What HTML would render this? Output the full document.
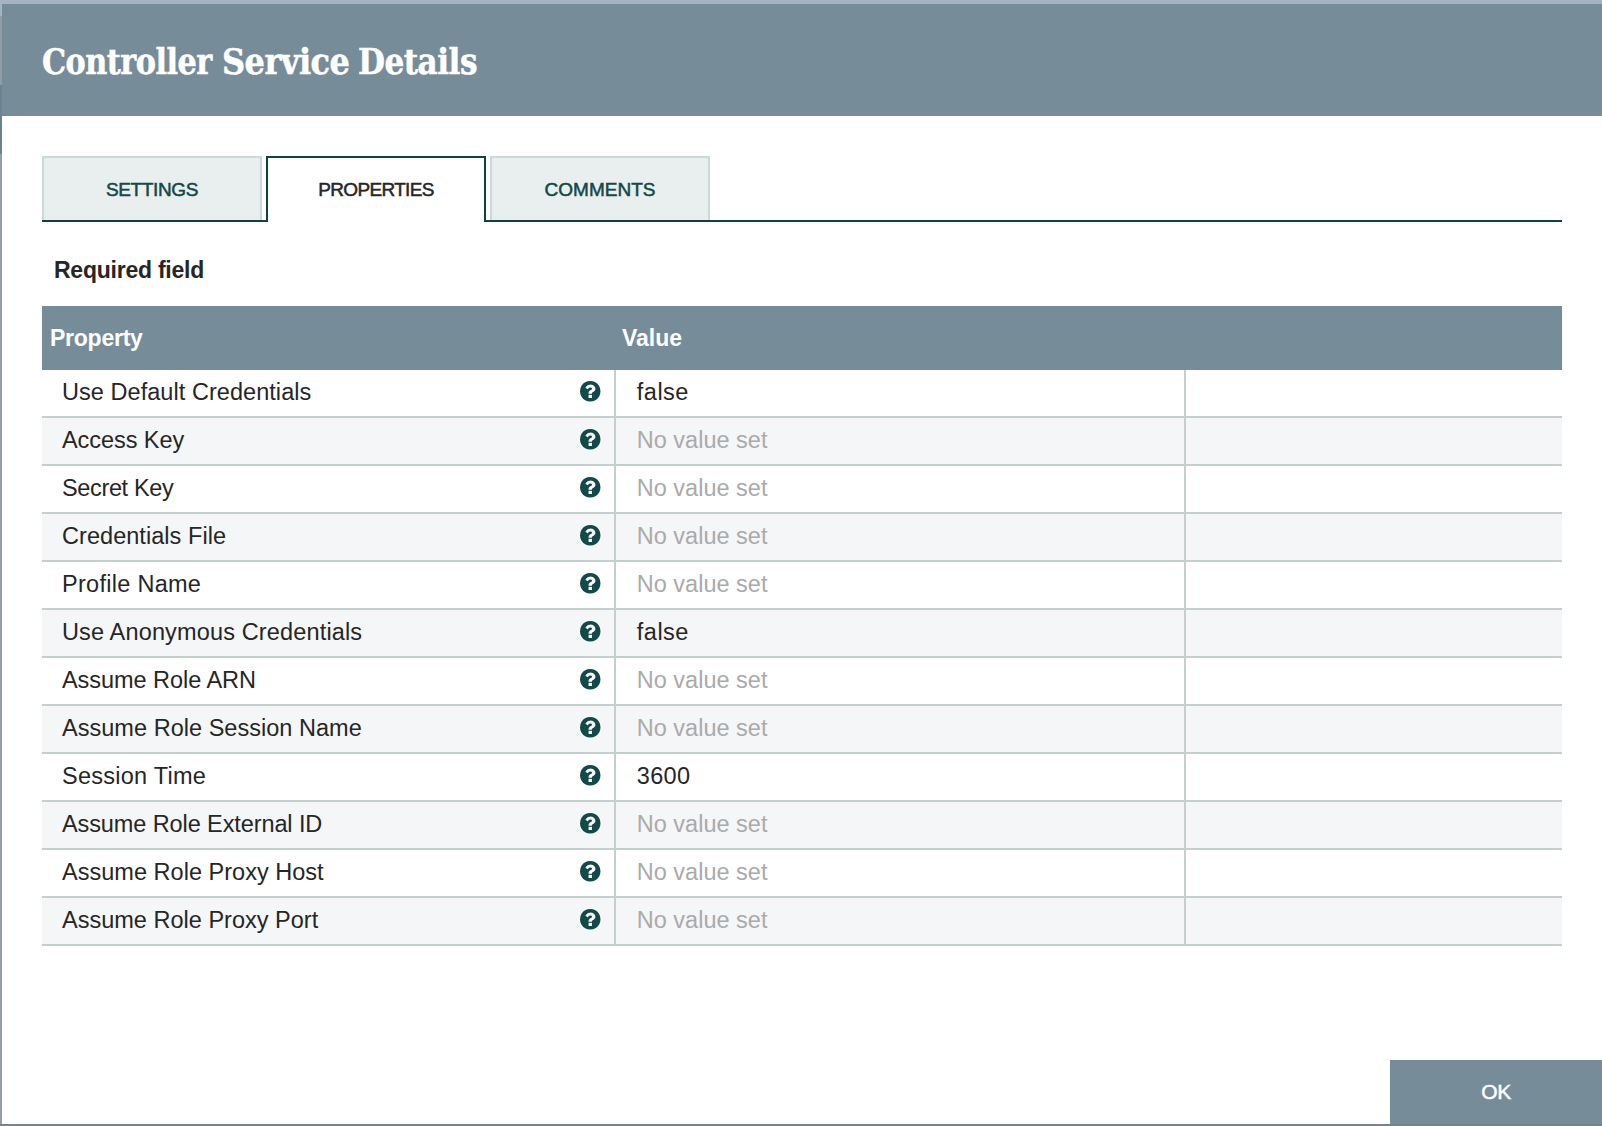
<!DOCTYPE html>
<html lang="en">
<head>
<meta charset="utf-8">
<title>Controller Service Details</title>
<style>
html,body{margin:0;padding:0;}
body{width:1602px;height:1126px;overflow:hidden;position:relative;background:#fff;font-family:"Liberation Sans",sans-serif;color:#262626;}
.abs{position:absolute;}
#bgtop{left:0;top:0;width:1602px;height:4px;background:#a6b4c1;}
#bgleft{left:0;top:0;width:2px;height:1126px;background:linear-gradient(#a3b5c2 0,#a3b5c2 16px,#8f9ea6 16px,#8f9ea6 85px,#6c8291 85px,#6c8291 154px,#929fa6 154px,#929fa6 100%);}
#bgbottom{left:0;top:1124px;width:1602px;height:2px;background:#77838b;}
#header{left:2px;top:4px;width:1600px;height:112px;background:#778c99;}
#title{-webkit-text-stroke:0.5px #fff;left:0.4px;top:37px;width:600px;height:50px;line-height:50px;font-family:"DejaVu Serif Condensed","DejaVu Serif","Liberation Serif",serif;font-weight:bold;font-size:35.6px;letter-spacing:-0.5px;color:#fff;white-space:nowrap;}
#title span{position:absolute;top:0;display:inline-block;transform-origin:0 50%;}
.tab{top:156px;height:62px;width:216px;border:2px solid #cdd8d9;border-bottom:none;background:#e9eeef;color:#124846;font-size:19px;-webkit-text-stroke:0.5px currentColor;text-align:center;line-height:63.6px;white-space:nowrap;}
.tab.sel{background:#fff;border-color:#0f4241;color:#262626;height:64px;z-index:2;}
#tabline{left:42px;top:220px;width:1520px;height:2px;background:#0f4241;}
#req{left:54px;top:256px;font-weight:bold;font-size:23px;letter-spacing:-0.24px;line-height:28px;white-space:nowrap;}
#thead{left:42px;top:306px;width:1520px;height:64px;background:#778c99;}
.th{top:306px;height:64px;line-height:65px;color:#fff;font-weight:bold;font-size:23px;white-space:nowrap;}
.row{left:42px;width:1520px;height:46px;border-bottom:2px solid #c4cfce;background:#fff;}
.row.odd{background:#f4f6f7;}
.row .name{position:absolute;left:20px;top:0;line-height:44px;font-size:23.5px;white-space:nowrap;color:#262626;}
.row .val{position:absolute;left:594.8px;top:0;line-height:44px;font-size:23.5px;white-space:nowrap;color:#262626;}
.row .val.unset{color:#aaaaaa;}
.row .ico{position:absolute;left:538px;top:11px;width:20.5px;height:20.5px;}
.vline{top:370px;width:2px;height:576px;background:#c4cfce;}
#ok{left:1390px;top:1060px;width:212px;height:64px;background:#778c99;color:#fff;font-size:21px;letter-spacing:-0.5px;-webkit-text-stroke:0.45px #fff;line-height:64px;text-align:center;}
</style>
</head>
<body>
<div class="abs" id="bgtop"></div>
<div class="abs" id="header"></div>
<div class="abs" id="bgleft"></div>
<div class="abs" id="bgbottom"></div>
<div class="abs" id="title"><span style="left:41.3px;transform:scaleX(0.945)">Controller</span> <span style="left:221.6px;transform:scaleX(1)">Service</span> <span style="left:357.5px;transform:scaleX(0.971)">Details</span></div>

<div class="abs" id="tabline"></div>
<div class="abs tab" style="left:42px;letter-spacing:-0.35px;">SETTINGS</div>
<div class="abs tab sel" style="left:266px;letter-spacing:-0.65px;">PROPERTIES</div>
<div class="abs tab" style="left:490px;letter-spacing:0px;">COMMENTS</div>

<div class="abs" id="req">Required field</div>

<div class="abs" id="thead"></div>
<div class="abs th" style="left:50px;letter-spacing:-0.25px;">Property</div>
<div class="abs th" style="left:622px;">Value</div>

<!--ROWS-START-->
<div class="abs row" style="top:370px;"><span class="name" style="letter-spacing:0.05px">Use Default Credentials</span><svg class="ico" viewBox="128 128 1536 1536"><path fill="#12494a" d="M1024 1376v-192q0-14-9-23t-23-9h-192q-14 0-23 9t-9 23v192q0 14 9 23t23 9h192q14 0 23-9t9-23zm256-672q0-88-55.500-163t-138.500-116-170-41q-243 0-371 213-15 24 8 42l132 100q7 6 19 6 16 0 25-12 53-68 86-92 34-24 86-24 48 0 85.500 26t37.500 59q0 38-20 61t-68 45q-63 28-115.500 86.500t-52.500 125.500v36q0 14 9 23t23 9h192q14 0 23-9t9-23q0-19 21.500-49.500t54.500-49.500q32-18 49-28.500t46-35 44.500-48 28-60.500 12.500-81zm384 192q0 209-103 385.500t-279.500 279.500-385.500 103-385.500-103-279.500-279.500-103-385.500 103-385.500 279.500-279.500 385.500-103 385.500 103 279.500 279.500 103 385.500z"/></svg><span class="val" style="letter-spacing:0.5px">false</span></div>
<div class="abs row odd" style="top:418px;"><span class="name" style="letter-spacing:-0.06px">Access Key</span><svg class="ico" viewBox="128 128 1536 1536"><path fill="#12494a" d="M1024 1376v-192q0-14-9-23t-23-9h-192q-14 0-23 9t-9 23v192q0 14 9 23t23 9h192q14 0 23-9t9-23zm256-672q0-88-55.500-163t-138.500-116-170-41q-243 0-371 213-15 24 8 42l132 100q7 6 19 6 16 0 25-12 53-68 86-92 34-24 86-24 48 0 85.500 26t37.500 59q0 38-20 61t-68 45q-63 28-115.500 86.500t-52.500 125.500v36q0 14 9 23t23 9h192q14 0 23-9t9-23q0-19 21.500-49.500t54.500-49.500q32-18 49-28.500t46-35 44.500-48 28-60.500 12.500-81zm384 192q0 209-103 385.500t-279.500 279.500-385.500 103-385.500-103-279.500-279.500-103-385.500 103-385.500 279.500-279.500 385.500-103 385.500 103 279.500 279.500 103 385.500z"/></svg><span class="val unset" style="letter-spacing:0px">No value set</span></div>
<div class="abs row" style="top:466px;"><span class="name" style="letter-spacing:-0.36px">Secret Key</span><svg class="ico" viewBox="128 128 1536 1536"><path fill="#12494a" d="M1024 1376v-192q0-14-9-23t-23-9h-192q-14 0-23 9t-9 23v192q0 14 9 23t23 9h192q14 0 23-9t9-23zm256-672q0-88-55.500-163t-138.500-116-170-41q-243 0-371 213-15 24 8 42l132 100q7 6 19 6 16 0 25-12 53-68 86-92 34-24 86-24 48 0 85.500 26t37.500 59q0 38-20 61t-68 45q-63 28-115.500 86.500t-52.500 125.500v36q0 14 9 23t23 9h192q14 0 23-9t9-23q0-19 21.500-49.500t54.500-49.500q32-18 49-28.500t46-35 44.500-48 28-60.500 12.500-81zm384 192q0 209-103 385.500t-279.500 279.500-385.500 103-385.500-103-279.500-279.500-103-385.500 103-385.500 279.500-279.500 385.500-103 385.500 103 279.500 279.500 103 385.500z"/></svg><span class="val unset" style="letter-spacing:0px">No value set</span></div>
<div class="abs row odd" style="top:514px;"><span class="name" style="letter-spacing:0.05px">Credentials File</span><svg class="ico" viewBox="128 128 1536 1536"><path fill="#12494a" d="M1024 1376v-192q0-14-9-23t-23-9h-192q-14 0-23 9t-9 23v192q0 14 9 23t23 9h192q14 0 23-9t9-23zm256-672q0-88-55.500-163t-138.500-116-170-41q-243 0-371 213-15 24 8 42l132 100q7 6 19 6 16 0 25-12 53-68 86-92 34-24 86-24 48 0 85.500 26t37.500 59q0 38-20 61t-68 45q-63 28-115.500 86.500t-52.500 125.500v36q0 14 9 23t23 9h192q14 0 23-9t9-23q0-19 21.500-49.500t54.500-49.500q32-18 49-28.500t46-35 44.500-48 28-60.500 12.500-81zm384 192q0 209-103 385.500t-279.500 279.500-385.500 103-385.500-103-279.500-279.500-103-385.500 103-385.500 279.500-279.500 385.500-103 385.500 103 279.500 279.500 103 385.500z"/></svg><span class="val unset" style="letter-spacing:0px">No value set</span></div>
<div class="abs row" style="top:562px;"><span class="name" style="letter-spacing:0.28px">Profile Name</span><svg class="ico" viewBox="128 128 1536 1536"><path fill="#12494a" d="M1024 1376v-192q0-14-9-23t-23-9h-192q-14 0-23 9t-9 23v192q0 14 9 23t23 9h192q14 0 23-9t9-23zm256-672q0-88-55.500-163t-138.500-116-170-41q-243 0-371 213-15 24 8 42l132 100q7 6 19 6 16 0 25-12 53-68 86-92 34-24 86-24 48 0 85.500 26t37.500 59q0 38-20 61t-68 45q-63 28-115.500 86.500t-52.500 125.500v36q0 14 9 23t23 9h192q14 0 23-9t9-23q0-19 21.500-49.500t54.500-49.500q32-18 49-28.500t46-35 44.500-48 28-60.500 12.500-81zm384 192q0 209-103 385.500t-279.500 279.500-385.500 103-385.500-103-279.500-279.500-103-385.500 103-385.500 279.500-279.500 385.500-103 385.500 103 279.500 279.500 103 385.500z"/></svg><span class="val unset" style="letter-spacing:0px">No value set</span></div>
<div class="abs row odd" style="top:610px;"><span class="name" style="letter-spacing:0.15px">Use Anonymous Credentials</span><svg class="ico" viewBox="128 128 1536 1536"><path fill="#12494a" d="M1024 1376v-192q0-14-9-23t-23-9h-192q-14 0-23 9t-9 23v192q0 14 9 23t23 9h192q14 0 23-9t9-23zm256-672q0-88-55.500-163t-138.500-116-170-41q-243 0-371 213-15 24 8 42l132 100q7 6 19 6 16 0 25-12 53-68 86-92 34-24 86-24 48 0 85.500 26t37.500 59q0 38-20 61t-68 45q-63 28-115.500 86.500t-52.500 125.500v36q0 14 9 23t23 9h192q14 0 23-9t9-23q0-19 21.500-49.500t54.500-49.500q32-18 49-28.500t46-35 44.500-48 28-60.500 12.500-81zm384 192q0 209-103 385.500t-279.500 279.500-385.500 103-385.500-103-279.500-279.500-103-385.500 103-385.500 279.500-279.500 385.500-103 385.500 103 279.500 279.500 103 385.500z"/></svg><span class="val" style="letter-spacing:0.5px">false</span></div>
<div class="abs row" style="top:658px;"><span class="name" style="letter-spacing:-0.05px">Assume Role ARN</span><svg class="ico" viewBox="128 128 1536 1536"><path fill="#12494a" d="M1024 1376v-192q0-14-9-23t-23-9h-192q-14 0-23 9t-9 23v192q0 14 9 23t23 9h192q14 0 23-9t9-23zm256-672q0-88-55.500-163t-138.500-116-170-41q-243 0-371 213-15 24 8 42l132 100q7 6 19 6 16 0 25-12 53-68 86-92 34-24 86-24 48 0 85.500 26t37.500 59q0 38-20 61t-68 45q-63 28-115.500 86.500t-52.500 125.500v36q0 14 9 23t23 9h192q14 0 23-9t9-23q0-19 21.500-49.500t54.500-49.500q32-18 49-28.500t46-35 44.500-48 28-60.500 12.500-81zm384 192q0 209-103 385.500t-279.500 279.500-385.500 103-385.500-103-279.500-279.500-103-385.500 103-385.500 279.500-279.500 385.500-103 385.500 103 279.500 279.500 103 385.500z"/></svg><span class="val unset" style="letter-spacing:0px">No value set</span></div>
<div class="abs row odd" style="top:706px;"><span class="name" style="letter-spacing:0.03px">Assume Role Session Name</span><svg class="ico" viewBox="128 128 1536 1536"><path fill="#12494a" d="M1024 1376v-192q0-14-9-23t-23-9h-192q-14 0-23 9t-9 23v192q0 14 9 23t23 9h192q14 0 23-9t9-23zm256-672q0-88-55.500-163t-138.500-116-170-41q-243 0-371 213-15 24 8 42l132 100q7 6 19 6 16 0 25-12 53-68 86-92 34-24 86-24 48 0 85.500 26t37.500 59q0 38-20 61t-68 45q-63 28-115.500 86.500t-52.500 125.500v36q0 14 9 23t23 9h192q14 0 23-9t9-23q0-19 21.500-49.500t54.500-49.500q32-18 49-28.500t46-35 44.500-48 28-60.500 12.500-81zm384 192q0 209-103 385.500t-279.500 279.500-385.500 103-385.500-103-279.500-279.500-103-385.500 103-385.500 279.500-279.500 385.500-103 385.500 103 279.500 279.500 103 385.500z"/></svg><span class="val unset" style="letter-spacing:0px">No value set</span></div>
<div class="abs row" style="top:754px;"><span class="name" style="letter-spacing:0.25px">Session Time</span><svg class="ico" viewBox="128 128 1536 1536"><path fill="#12494a" d="M1024 1376v-192q0-14-9-23t-23-9h-192q-14 0-23 9t-9 23v192q0 14 9 23t23 9h192q14 0 23-9t9-23zm256-672q0-88-55.500-163t-138.500-116-170-41q-243 0-371 213-15 24 8 42l132 100q7 6 19 6 16 0 25-12 53-68 86-92 34-24 86-24 48 0 85.500 26t37.500 59q0 38-20 61t-68 45q-63 28-115.500 86.500t-52.500 125.500v36q0 14 9 23t23 9h192q14 0 23-9t9-23q0-19 21.500-49.500t54.500-49.500q32-18 49-28.500t46-35 44.500-48 28-60.500 12.500-81zm384 192q0 209-103 385.500t-279.500 279.500-385.500 103-385.500-103-279.500-279.500-103-385.500 103-385.500 279.500-279.500 385.500-103 385.500 103 279.500 279.500 103 385.500z"/></svg><span class="val" style="letter-spacing:0.3px">3600</span></div>
<div class="abs row odd" style="top:802px;"><span class="name" style="letter-spacing:-0.10px">Assume Role External ID</span><svg class="ico" viewBox="128 128 1536 1536"><path fill="#12494a" d="M1024 1376v-192q0-14-9-23t-23-9h-192q-14 0-23 9t-9 23v192q0 14 9 23t23 9h192q14 0 23-9t9-23zm256-672q0-88-55.500-163t-138.500-116-170-41q-243 0-371 213-15 24 8 42l132 100q7 6 19 6 16 0 25-12 53-68 86-92 34-24 86-24 48 0 85.500 26t37.500 59q0 38-20 61t-68 45q-63 28-115.500 86.500t-52.500 125.500v36q0 14 9 23t23 9h192q14 0 23-9t9-23q0-19 21.500-49.500t54.500-49.500q32-18 49-28.500t46-35 44.500-48 28-60.500 12.500-81zm384 192q0 209-103 385.500t-279.500 279.500-385.500 103-385.500-103-279.500-279.500-103-385.500 103-385.500 279.500-279.500 385.500-103 385.500 103 279.500 279.500 103 385.500z"/></svg><span class="val unset" style="letter-spacing:0px">No value set</span></div>
<div class="abs row" style="top:850px;"><span class="name" style="letter-spacing:0.02px">Assume Role Proxy Host</span><svg class="ico" viewBox="128 128 1536 1536"><path fill="#12494a" d="M1024 1376v-192q0-14-9-23t-23-9h-192q-14 0-23 9t-9 23v192q0 14 9 23t23 9h192q14 0 23-9t9-23zm256-672q0-88-55.500-163t-138.500-116-170-41q-243 0-371 213-15 24 8 42l132 100q7 6 19 6 16 0 25-12 53-68 86-92 34-24 86-24 48 0 85.500 26t37.500 59q0 38-20 61t-68 45q-63 28-115.500 86.500t-52.500 125.500v36q0 14 9 23t23 9h192q14 0 23-9t9-23q0-19 21.500-49.500t54.500-49.500q32-18 49-28.500t46-35 44.500-48 28-60.500 12.500-81zm384 192q0 209-103 385.500t-279.500 279.500-385.500 103-385.500-103-279.500-279.500-103-385.500 103-385.500 279.500-279.500 385.500-103 385.500 103 279.500 279.500 103 385.500z"/></svg><span class="val unset" style="letter-spacing:0px">No value set</span></div>
<div class="abs row odd" style="top:898px;"><span class="name" style="letter-spacing:0.01px">Assume Role Proxy Port</span><svg class="ico" viewBox="128 128 1536 1536"><path fill="#12494a" d="M1024 1376v-192q0-14-9-23t-23-9h-192q-14 0-23 9t-9 23v192q0 14 9 23t23 9h192q14 0 23-9t9-23zm256-672q0-88-55.500-163t-138.500-116-170-41q-243 0-371 213-15 24 8 42l132 100q7 6 19 6 16 0 25-12 53-68 86-92 34-24 86-24 48 0 85.500 26t37.500 59q0 38-20 61t-68 45q-63 28-115.500 86.500t-52.500 125.500v36q0 14 9 23t23 9h192q14 0 23-9t9-23q0-19 21.500-49.500t54.500-49.500q32-18 49-28.500t46-35 44.500-48 28-60.500 12.500-81zm384 192q0 209-103 385.500t-279.500 279.500-385.500 103-385.500-103-279.500-279.500-103-385.500 103-385.500 279.500-279.500 385.500-103 385.500 103 279.500 279.500 103 385.500z"/></svg><span class="val unset" style="letter-spacing:0px">No value set</span></div>
<!--ROWS-END-->

<div class="abs vline" style="left:614px;"></div>
<div class="abs vline" style="left:1184px;"></div>

<div class="abs" id="ok">OK</div>
</body>
</html>
